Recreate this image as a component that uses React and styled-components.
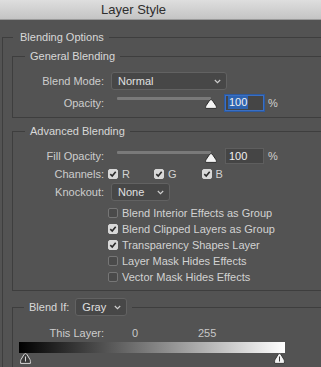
import React from "react";
import styled, { createGlobalStyle } from "styled-components";

const Global = createGlobalStyle`
  html, body { margin: 0; padding: 0; background: #535353; }
  body { font-family: "Liberation Sans", Arial, sans-serif; font-size: 11px; color: #d0d0d0; }
  * { box-sizing: border-box; }
`;

const Window = styled.div`
  width: 321px;
  height: 367px;
  overflow: hidden;
  background: #535353;
`;

const TitleBar = styled.div`
  height: 20px;
  background: linear-gradient(#dedede, #c4c4c4);
  border-bottom: 1px solid #9a9a9a;
  display: flex;
  align-items: center;
  padding-left: 101px;
  font-size: 13px;
  color: #2e2e2e;
  line-height: 20px;
`;

const Inner = styled.div`
  width: 360px;
  padding: 10px 0 0 2px;
`;

const Group = styled.fieldset`
  margin: ${(p) => p.$mt || 0}px 0 0 0;
  border: 1px solid #3e3e3e;
  padding: ${(p) => p.$pad || "0"};
  min-width: 0;
`;

const Legend = styled.legend`
  margin-left: ${(p) => p.$ml || 12}px;
  padding: 0 5px 0 ${(p) => p.$pl || 5}px;
  line-height: 14px;
  color: #d8d8d8;
  font-size: 11px;
  display: flex;
  align-items: center;
  gap: 6px;
`;

const Stack = styled.div`
  display: flex;
  flex-direction: column;
`;

const Row = styled.div`
  display: flex;
  align-items: center;
  height: ${(p) => p.$h || 16}px;
  margin-top: ${(p) => p.$mt || 0}px;
`;

const Label = styled.span`
  width: 91px;
  text-align: right;
  color: #cdcdcd;
  margin-right: ${(p) => p.$mr || 7}px;
  white-space: nowrap;
`;

const SelectBox = styled.div`
  width: ${(p) => p.$w}px;
  height: 18px;
  background: #474747;
  border: 1px solid #626262;
  border-radius: 3px;
  display: flex;
  align-items: center;
  justify-content: space-between;
  padding: 0 5px 0 6px;
  color: #e0e0e0;
  font-size: 11px;
`;

const Chevron = () => (
  <svg width="7" height="5" viewBox="0 0 7 5">
    <path d="M0.8 1 L3.5 3.7 L6.2 1" fill="none" stroke="#d0d0d0" strokeWidth="1.1" />
  </svg>
);

const Select = ({ w, children }) => (
  <SelectBox $w={w}>
    <span>{children}</span>
    <Chevron />
  </SelectBox>
);

const SliderWrap = styled.div`
  position: relative;
  width: 100px;
  height: 17px;
  margin-left: 6px;
  margin-right: 8px;
`;

const Track = styled.div`
  position: absolute;
  left: 0;
  top: 3px;
  width: 94px;
  height: 3px;
  border-radius: 1px;
  background: #7a7a7a;
`;

const ThumbSvg = styled.svg`
  position: absolute;
  left: 88px;
  top: 5px;
`;

const Slider = () => (
  <SliderWrap>
    <Track />
    <ThumbSvg width="12" height="10" viewBox="0 0 12 10">
      <path
        d="M6 0.6 C5.1 0.6 4.7 1.1 4.2 1.9 L1.2 6.4 C0.7 7.2 0.6 7.8 0.6 8.4 L0.6 9.4 L11.4 9.4 L11.4 8.4 C11.4 7.8 11.3 7.2 10.8 6.4 L7.8 1.9 C7.3 1.1 6.9 0.6 6 0.6 Z"
        fill="#f4f4f4"
        stroke="#2e2e2e"
        strokeWidth="1"
      />
    </ThumbSvg>
  </SliderWrap>
);

const NumInput = styled.div`
  width: 39px;
  height: 16px;
  background: #454545;
  border: 1px solid ${(p) => (p.$focus ? "#3a6fc4" : "#5e5e5e")};
  box-shadow: ${(p) => (p.$focus ? "0 0 0 1px #2c5aa0" : "none")};
  display: flex;
  align-items: center;
  padding-left: 2px;
  color: #e4e4e4;
  font-size: 11px;
`;

const Selected = styled.span`
  background: ${(p) => (p.$on ? "#2e63b0" : "transparent")};
  color: #f0f0f0;
  padding: 0 1px;
  line-height: 13px;
`;

const Pct = styled.span`
  margin-left: 4px;
  color: #d0d0d0;
`;

const Box = styled.span`
  width: 10px;
  height: 10px;
  border-radius: 2px;
  flex: none;
  display: inline-flex;
  align-items: center;
  justify-content: center;
  background: ${(p) => (p.$on ? "#d8d8d8" : "#4a4a4a")};
  border: 1px solid ${(p) => (p.$on ? "#d8d8d8" : "#767676")};
`;

const Check = ({ on }) => (
  <Box $on={on}>
    {on && (
      <svg width="8" height="8" viewBox="0 0 8 8">
        <path d="M1.3 4.2 L3.2 6 L6.7 1.8" fill="none" stroke="#2a2a2a" strokeWidth="1.6" />
      </svg>
    )}
  </Box>
);

const CheckItem = styled.span`
  display: inline-flex;
  align-items: center;
  gap: 4px;
  margin-right: ${(p) => p.$mr || 0}px;
  color: #d2d2d2;
`;

const CheckList = styled.div`
  display: flex;
  flex-direction: column;
  margin: 4px 0 0 95px;
`;

const CheckRow = styled.div`
  height: 16px;
  display: flex;
  align-items: center;
  gap: 4px;
  color: #d2d2d2;
`;

const LayerRow = styled.div`
  height: 14px;
  display: flex;
  align-items: center;
  color: #c8c8c8;
`;

const Value = styled.span`
  width: ${(p) => p.$w}px;
  color: #c8c8c8;
`;

const Gradient = styled.div`
  margin: 2px 0 0 6px;
  width: 266px;
  height: 11px;
  background: linear-gradient(to right, #000, #fff);
`;

const ThumbRow = styled.div`
  margin-left: 7px;
  width: 265px;
  height: 12px;
  display: flex;
  justify-content: space-between;
`;

const Stop = ({ dark }) => (
  <svg width="11" height="11" viewBox="0 0 11 11">
    <path
      d="M5.5 0.6 C4.7 0.6 4.3 1.1 3.8 1.9 L1.1 6.4 C0.7 7.1 0.6 7.7 0.6 8.3 L0.6 10.4 L10.4 10.4 L10.4 8.3 C10.4 7.7 10.3 7.1 9.9 6.4 L7.2 1.9 C6.7 1.1 6.3 0.6 5.5 0.6 Z"
      fill={dark ? "#3a3a3a" : "#f2f2f2"}
      stroke={dark ? "#d8d8d8" : "#3a3a3a"}
      strokeWidth="1"
    />
    <path d="M5.5 3.5 L5.5 8.5" stroke={dark ? "#d8d8d8" : "#3a3a3a"} strokeWidth="1" />
  </svg>
);

export default function App() {
  return (
    <>
      <Global />
      <Window>
        <TitleBar>Layer Style</TitleBar>
        <Inner>
          <Group $pad="5px 0 40px 9px">
            <Legend $ml={1} $pl={7}>Blending Options</Legend>

            <Group $pad="9px 0 6px 0">
              <Legend>General Blending</Legend>
              <Stack>
                <Row $h={18}>
                  <Label>Blend Mode:</Label>
                  <Select w={116}>Normal</Select>
                </Row>
                <Row $h={17} $mt={4}>
                  <Label>Opacity:</Label>
                  <Slider />
                  <NumInput $focus>
                    <Selected $on>100</Selected>
                  </NumInput>
                  <Pct>%</Pct>
                </Row>
              </Stack>
            </Group>

            <Group $mt={6} $pad="10px 0 5px 0">
              <Legend>Advanced Blending</Legend>
              <Stack>
                <Row $h={16}>
                  <Label>Fill Opacity:</Label>
                  <Slider />
                  <NumInput>
                    <Selected>100</Selected>
                  </NumInput>
                  <Pct>%</Pct>
                </Row>
                <Row $h={16} $mt={2}>
                  <Label $mr={4}>Channels:</Label>
                  <CheckItem $mr={24}>
                    <Check on />R
                  </CheckItem>
                  <CheckItem $mr={25}>
                    <Check on />G
                  </CheckItem>
                  <CheckItem>
                    <Check on />B
                  </CheckItem>
                </Row>
                <Row $h={18} $mt={1}>
                  <Label>Knockout:</Label>
                  <Select w={59}>None</Select>
                </Row>
                <CheckList>
                  <CheckRow>
                    <Check />Blend Interior Effects as Group
                  </CheckRow>
                  <CheckRow>
                    <Check on />Blend Clipped Layers as Group
                  </CheckRow>
                  <CheckRow>
                    <Check on />Transparency Shapes Layer
                  </CheckRow>
                  <CheckRow>
                    <Check />Layer Mask Hides Effects
                  </CheckRow>
                  <CheckRow>
                    <Check />Vector Mask Hides Effects
                  </CheckRow>
                </CheckList>
              </Stack>
            </Group>

            <Group $mt={7} $pad="10px 0 6px 0">
              <Legend $ml={11} $pl={5}>
                Blend If:
                <Select w={52}>Gray</Select>
              </Legend>
              <Stack>
                <LayerRow>
                  <Label $mr={28}>This Layer:</Label>
                  <Value $w={66}>0</Value>
                  <Value $w={40}>255</Value>
                </LayerRow>
                <Gradient />
                <ThumbRow>
                  <Stop dark />
                  <Stop />
                </ThumbRow>
              </Stack>
            </Group>
          </Group>
        </Inner>
      </Window>
    </>
  );
}
